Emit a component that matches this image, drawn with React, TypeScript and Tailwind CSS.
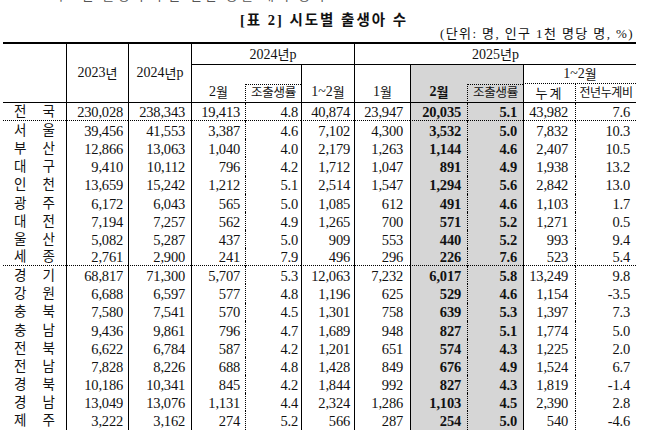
const rows: [string, string, string[]][] = [
  ["전", "국", ["230,028", "238,343", "19,413", "4.8", "40,874", "23,947", "20,035", "5.1", "43,982", "7.6"]],
  ["서", "울", ["39,456", "41,553", "3,387", "4.6", "7,102", "4,300", "3,532", "5.0", "7,832", "10.3"]],
  ["부", "산", ["12,866", "13,063", "1,040", "4.0", "2,179", "1,263", "1,144", "4.6", "2,407", "10.5"]],
  ["대", "구", ["9,410", "10,112", "796", "4.2", "1,712", "1,047", "891", "4.9", "1,938", "13.2"]],
  ["인", "천", ["13,659", "15,242", "1,212", "5.1", "2,514", "1,547", "1,294", "5.6", "2,842", "13.0"]],
  ["광", "주", ["6,172", "6,043", "565", "5.0", "1,085", "612", "491", "4.6", "1,103", "1.7"]],
  ["대", "전", ["7,194", "7,257", "562", "4.9", "1,265", "700", "571", "5.2", "1,271", "0.5"]],
  ["울", "산", ["5,082", "5,287", "437", "5.0", "909", "553", "440", "5.2", "993", "9.4"]],
  ["세", "종", ["2,761", "2,900", "241", "7.9", "496", "296", "226", "7.6", "523", "5.4"]],
  ["경", "기", ["68,817", "71,300", "5,707", "5.3", "12,063", "7,232", "6,017", "5.8", "13,249", "9.8"]],
  ["강", "원", ["6,688", "6,597", "577", "4.8", "1,196", "625", "529", "4.6", "1,154", "-3.5"]],
  ["충", "북", ["7,580", "7,541", "570", "4.5", "1,301", "758", "639", "5.3", "1,397", "7.3"]],
  ["충", "남", ["9,436", "9,861", "796", "4.7", "1,689", "948", "827", "5.1", "1,774", "5.0"]],
  ["전", "북", ["6,622", "6,784", "587", "4.2", "1,201", "651", "574", "4.3", "1,225", "2.0"]],
  ["전", "남", ["7,828", "8,226", "688", "4.8", "1,428", "849", "676", "4.9", "1,524", "6.7"]],
  ["경", "북", ["10,186", "10,341", "845", "4.2", "1,844", "992", "827", "4.3", "1,819", "-1.4"]],
  ["경", "남", ["13,049", "13,076", "1,131", "4.4", "2,324", "1,286", "1,103", "4.5", "2,390", "2.8"]],
  ["제", "주", ["3,222", "3,162", "274", "5.2", "566", "287", "254", "5.0", "540", "-4.6"]],
];

// 숫자 칸별 테두리/여백
const numCols = [
  "border-l border-black pr-[5px]",
  "border-l border-black pr-[6px]",
  "border-l border-black pr-[5px]",
  "border-l border-black [border-left-style:dotted] pr-[3px]",
  "border-l border-black pr-[4px]",
  "border-l border-black pr-[7px]",
  "border-l border-black pr-[6px] bg-[#d6d6d6] font-bold",
  "border-l border-black [border-left-style:dotted] pr-[6px] bg-[#d6d6d6] font-bold",
  "border-l border-black pr-[7px]",
  "border-l border-black [border-left-style:dotted] pr-[6px]",
];

const cols = "grid-cols-[63px_62px_63px_54px_56px_53px_56px_57px_56px_52px_61px]";
const font = { fontFamily: '"Liberation Serif", "Noto Sans CJK KR", serif' };

const Header = () => (
  <div className={`grid ${cols} grid-rows-[21px_19px_19px] border-t-2 border-black text-[14px] leading-none`}>
    <div className="col-start-1 row-start-1 row-span-3 border-b border-black" />
    <div className="col-start-2 row-start-1 row-span-3 border-l border-b border-black flex items-center justify-center">
      2023<span className="text-[13px]">년</span>
    </div>
    <div className="col-start-3 row-start-1 row-span-3 border-l border-b border-black flex items-center justify-center">
      2024<span className="text-[13px]">년</span>p
    </div>
    <div className="col-start-4 col-span-3 row-start-1 border-l border-b border-black flex items-center justify-center pt-[1px]">
      2024<span className="text-[13px]">년</span>p
    </div>
    <div className="col-start-7 col-span-5 row-start-1 border-l border-b border-black flex items-center justify-center pt-[1px]">
      2025<span className="text-[13px]">년</span>p
    </div>

    <div className="col-start-4 row-start-2 row-span-2 border-l border-b border-black flex items-end justify-center pb-[3px]">
      2<span className="text-[13px]">월</span>
    </div>
    <div className="col-start-5 row-start-3 border-l border-t border-b border-black [border-left-style:dotted] [border-top-style:dotted] flex items-center justify-center text-[12.5px] tracking-[-0.3px]">
      조출생률
    </div>
    <div className="col-start-6 row-start-2 row-span-2 border-l border-b border-black flex items-end justify-center pb-[3px]">
      1~2<span className="text-[13px]">월</span>
    </div>
    <div className="col-start-7 row-start-2 row-span-2 border-l border-b border-black flex items-end justify-center pb-[3px]">
      1<span className="text-[13px]">월</span>
    </div>
    <div className="col-start-8 row-start-2 row-span-2 border-l border-b border-black bg-[#d6d6d6] font-bold flex items-end justify-center pb-[3px]">
      2<span className="text-[13px]">월</span>
    </div>
    <div className="col-start-9 row-start-2 bg-[#d6d6d6]" />
    <div className="col-start-9 row-start-3 border-l border-t border-b border-black [border-left-style:dotted] [border-top-style:dotted] bg-[#d6d6d6] flex items-center justify-center text-[12.5px] tracking-[-0.3px]">
      조출생률
    </div>
    <div className="col-start-10 col-span-2 row-start-2 border-l border-b border-black [border-bottom-style:dotted] flex items-center justify-center">
      1~2<span className="text-[13px]">월</span>
    </div>
    <div className="col-start-10 row-start-3 border-l border-b border-black flex items-center justify-center text-[13px] tracking-[2px]">
      누계
    </div>
    <div className="col-start-11 row-start-3 border-l border-b border-black [border-left-style:dotted] flex items-center justify-center text-[12px] tracking-[-0.4px]">
      전년누계비
    </div>
  </div>
);

const App = () => (
  <div className="w-[658px] h-[430px] overflow-hidden bg-white text-[#111]" style={font}>
    <div className="h-[4px] overflow-hidden pl-[30px] text-[13px] text-[#555]">
      <div className="-mt-[11px] leading-[14px] tracking-[3px]">ㅇ 시도별 출생아 수는 전년 동월 대비 증가</div>
    </div>
    <div className="mt-[5px] h-[22px] leading-[22px] text-center pr-[10px] font-bold text-[14.5px] tracking-[2px]">
      [표 2] 시도별 출생아 수
    </div>
    <div className="-mt-[4px] h-[14px] leading-[14px] text-right pr-[24px] text-[13px] tracking-[1.4px]">
      (단위: 명, 인구 1천 명당 명, %)
    </div>
    <div className="ml-[3px] w-[633px] mt-[1px]">
      <Header />
      <div className={`grid ${cols} grid-rows-[repeat(18,18.15px)] text-[14.5px] leading-none`}>
        {rows.map(([a, b, vals], i) => {
          const line = i === 0 || i === 8 ? " border-b border-b-black [border-bottom-style:dotted]" : "";
          return [
            <div key={`r${i}`} className={`flex items-center justify-between px-[11px] pt-[1px] text-[13.5px] text-[#222]${line}`}>
              <span>{a}</span>
              <span>{b}</span>
            </div>,
            ...vals.map((v, j) => (
              <div key={`c${i}-${j}`} className={`flex items-center justify-end pt-[2px] tracking-[-0.2px] ${numCols[j]}${line}`}>
                {v}
              </div>
            )),
          ];
        })}
      </div>
    </div>
  </div>
);

export default App;
